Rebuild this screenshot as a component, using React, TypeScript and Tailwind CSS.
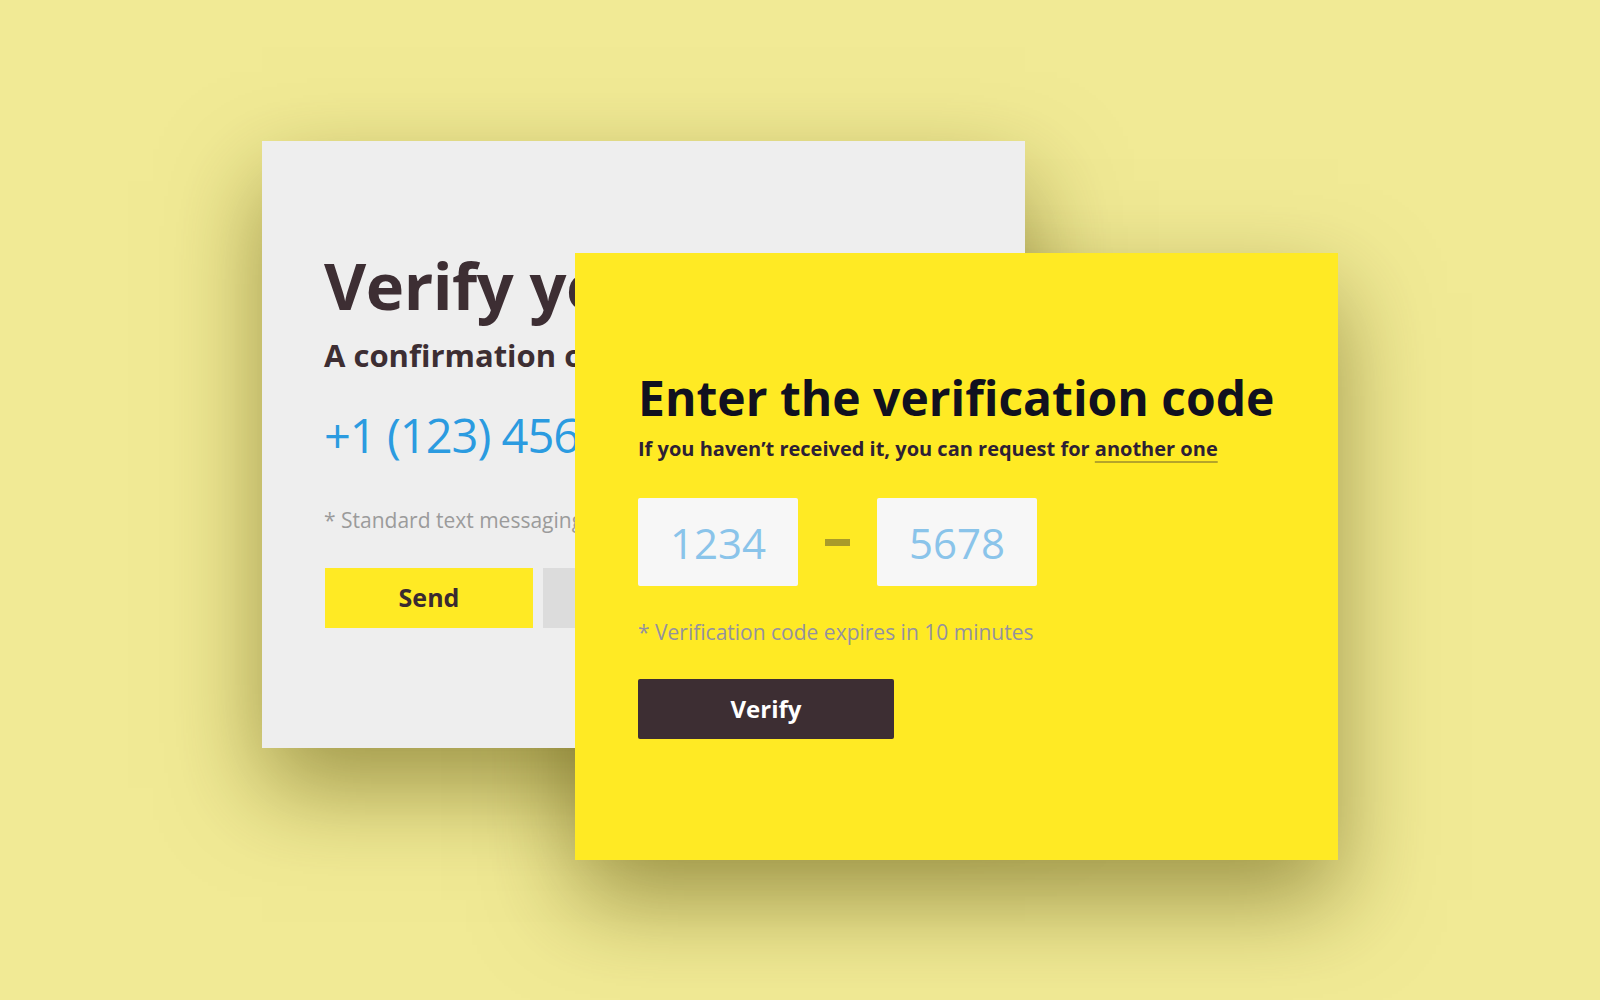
import React from "react";

const cardBox = "absolute w-[763px] h-[607px]";

function PhoneCard() {
  return (
    <div className={`${cardBox} left-[262px] top-[141px] overflow-hidden bg-[#eeeeee] pl-[62px] pt-[112px]`}>
      <h1 className="whitespace-nowrap text-[65px] leading-none font-bold tracking-[-0.5px] text-[#3d2e33]">
        Verify your phone number
      </h1>
      <p className="mt-[22px] whitespace-nowrap text-[31px] leading-none font-bold text-[#3d2e33]">
        A confirmation code will be sent to
      </p>
      <p className="mt-[41px] whitespace-nowrap text-[47px] leading-none tracking-[-1px] text-[#2b9be0]">
        +1 (123) 456-7890
      </p>
      <p className="mt-[51px] whitespace-nowrap text-[21px] leading-none text-[#9b9b9b]">
        * Standard text messaging rates may apply
      </p>
      <div className="mt-[37px] flex gap-[10px] pl-px">
        <button className="w-[208px] h-[60px] bg-[#ffea24] text-[25px] font-bold text-[#3a2a30]">Send</button>
        <button className="w-[208px] h-[60px] bg-[#dcdcdc] text-[25px] font-bold text-[#3a2a30]">Cancel</button>
      </div>
    </div>
  );
}

function CodeCard() {
  return (
    <div className={`${cardBox} left-[575px] top-[253px] bg-[#ffea24] pl-[63px] pt-[121px]`}>
      <h2 className="whitespace-nowrap text-[48px] leading-none font-bold text-[#11111f]">Enter the verification code</h2>
      <p className="mt-[17px] whitespace-nowrap text-[20px] leading-none font-bold text-[#2d2035]">
        If you haven’t received it, you can request for{" "}
        <a className="underline decoration-[#b5a42a] decoration-2 underline-offset-[5px]">another one</a>
      </p>
      <div className="mt-[39px] flex items-center gap-[27px]">
        <div className="w-[160px] h-[88px] flex items-center justify-center rounded-[2px] bg-[#f7f7f7] text-[42px] text-[#8ac4ea]">
          1234
        </div>
        <div className="w-[25px] h-[7px] bg-[#a99b2a]" />
        <div className="w-[160px] h-[88px] flex items-center justify-center rounded-[2px] bg-[#f7f7f7] text-[42px] text-[#8ac4ea]">
          5678
        </div>
      </div>
      <p className="mt-[36px] whitespace-nowrap text-[21px] leading-none text-[#9491a0]">
        * Verification code expires in 10 minutes
      </p>
      <button className="mt-[36px] w-[256px] h-[60px] rounded-[2px] bg-[#3d2e33] text-[24px] font-bold text-white">
        Verify
      </button>
    </div>
  );
}

export default function App() {
  return (
    <div className="relative w-[1600px] h-[1000px] overflow-hidden bg-[#f1ea95] font-['Open_Sans',sans-serif]">
      {/* shadows sit under both cards, they don't fall on the grey card */}
      <div className={`${cardBox} left-[262px] top-[141px] shadow-[0_40px_90px_rgba(90,80,10,0.55)]`} />
      <div className={`${cardBox} left-[575px] top-[253px] shadow-[0_40px_90px_rgba(90,80,10,0.55)]`} />
      <PhoneCard />
      <CodeCard />
    </div>
  );
}
